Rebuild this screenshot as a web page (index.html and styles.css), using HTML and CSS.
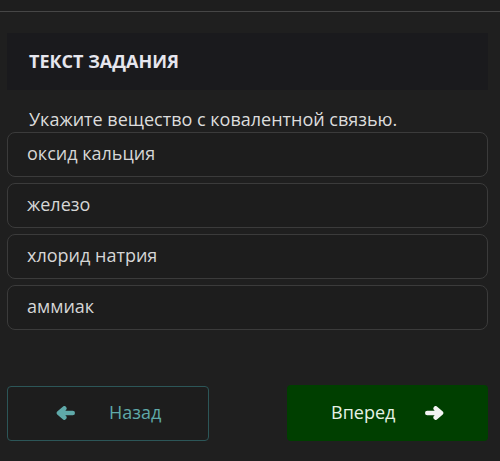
FILE: index.html
```html
<!DOCTYPE html>
<html lang="ru">
<head>
<meta charset="utf-8">
<link rel="stylesheet" href="styles.css">
</head>
<body>
<div class="topbar"></div>
<main class="page">
  <div class="task-head">ТЕКСТ ЗАДАНИЯ</div>
  <p class="question">Укажите вещество с ковалентной связью.</p>
  <ul class="options">
    <li class="option">оксид кальция</li>
    <li class="option">железо</li>
    <li class="option">хлорид натрия</li>
    <li class="option">аммиак</li>
  </ul>
  <div class="nav">
    <button class="btn btn-back">
      <svg class="arrow" viewBox="0 0 19 14" width="19" height="14"><path fill="none" stroke="currentColor" stroke-width="4.6" stroke-linecap="round" stroke-linejoin="round" d="M16.7 7H3.5M8.3 2.4L3 7l5.3 4.6"/></svg>
      <span class="label">Назад</span>
    </button>
    <button class="btn btn-next">
      <span class="label">Вперед</span>
      <svg class="arrow" viewBox="0 0 19 14" width="19" height="14"><path fill="none" stroke="currentColor" stroke-width="4.6" stroke-linecap="round" stroke-linejoin="round" d="M2.3 7h13.2M10.7 2.4L16 7l-5.3 4.6"/></svg>
    </button>
  </div>
</main>
</body>
</html>
```
FILE: styles.css
```css
html, body {
  margin: 0;
  padding: 0;
  background: #1f1f1f;
  font-family: "Open Sans", "Noto Sans", sans-serif;
  width: 500px;
  height: 461px;
  overflow: hidden;
}
.topbar {
  height: 11px;
  border-bottom: 1px solid #464646;
  background: #1e1e1e;
}
.page {
  padding: 21px 12px 0 7px;
}
.task-head {
  background: #1a1a1d;
  height: 57px;
  box-sizing: border-box;
  padding: 16px 22px 0;
  font-weight: 700;
  font-size: 18px;
  line-height: 24px;
  color: #e6e6ee;
}
.question {
  margin: 16px 0 0 22px;
  font-size: 18px;
  line-height: 26px;
  color: #dcdcdc;
  height: 26px;
}
.options {
  list-style: none;
  margin: 0;
  padding: 0;
  display: flex;
  flex-direction: column;
  gap: 6px;
}
.option {
  height: 45px;
  box-sizing: border-box;
  border: 1px solid #3b3b3b;
  border-radius: 8px;
  background: #1d1d1d;
  padding: 0 19px;
  display: flex;
  align-items: center;
  font-size: 18px;
  color: #d6d6d6;
  padding-bottom: 4px;
}
.nav {
  display: flex;
  justify-content: space-between;
  align-items: center;
  margin-top: 55px;
}
.btn {
  width: 202px;
  height: 55px;
  box-sizing: border-box;
  font-family: "Open Sans", "Noto Sans", sans-serif;
  font-size: 18px;
  display: flex;
  align-items: center;
  border-radius: 4px;
  padding: 0;
  cursor: pointer;
}
.btn-back {
  background: #1d1d1d;
  border: 1px solid #2c5658;
  color: #5fa9a9;
  padding-left: 48px;
}
.btn-back .label {
  margin-left: 34px;
}
.btn-next {
  background: #003f00;
  border: none;
  color: #e6f2e6;
  padding-left: 44px;
  width: 201px;
  height: 56px;
}
.btn-next .label {
  margin-right: 30px;
}
.btn .label {
  padding-bottom: 2px;
}
.btn-next .arrow {
  color: #f4f4f4;
}
.arrow {
  display: block;
}
```
